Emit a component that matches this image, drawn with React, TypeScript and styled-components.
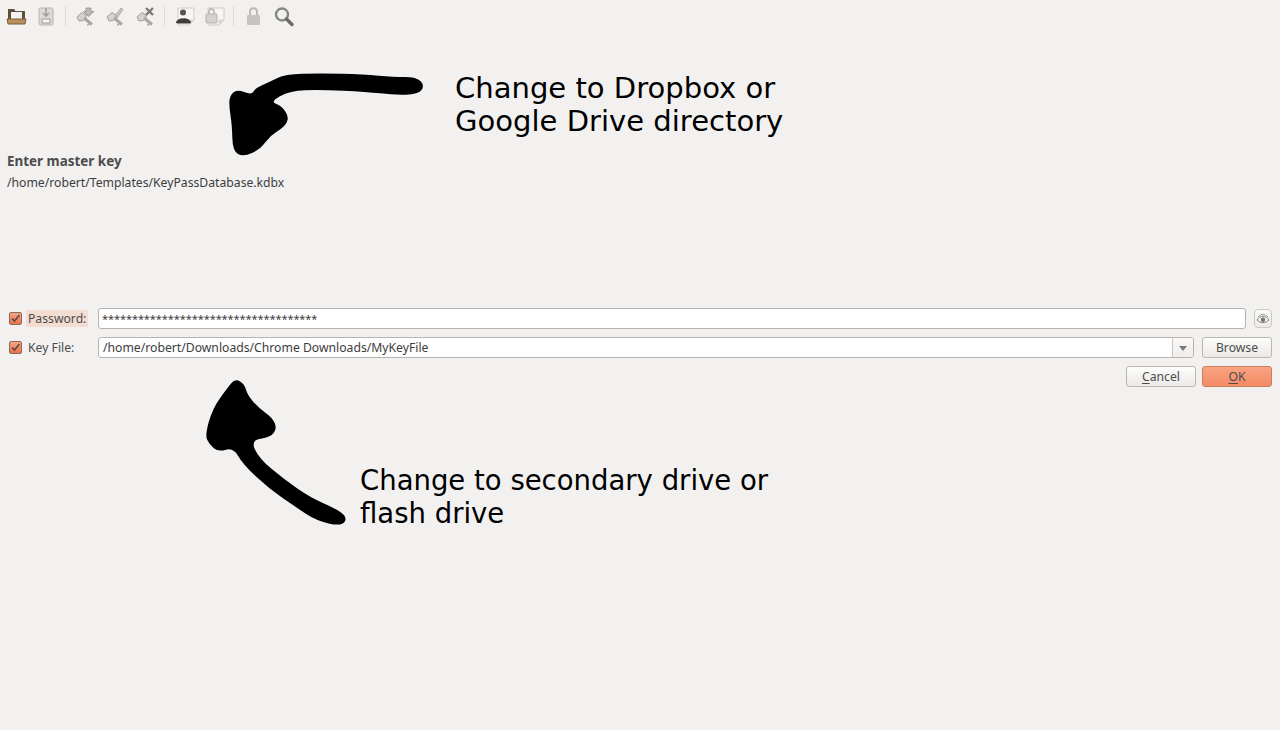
import React from 'react';
import styled, { createGlobalStyle } from 'styled-components';

const GlobalStyle = createGlobalStyle`
  html, body {
    margin: 0;
    padding: 0;
    background: #f2f1f0;
  }
  body {
    font-family: 'Noto Sans', 'Open Sans', sans-serif;
    font-size: 12.2px;
    color: #3c3c3c;
  }
`;

const Page = styled.div`
  position: relative;
  width: 1280px;
  height: 730px;
  overflow: hidden;
  background: #f2f1f0;
  box-sizing: border-box;
`;

const Toolbar = styled.div`
  display: flex;
  align-items: center;
  height: 32px;
  padding-left: 5px;
  box-sizing: border-box;
`;

const ToolIcon = styled.svg`
  width: 22px;
  height: 22px;
  margin-right: 8px;
  flex: none;
  filter: blur(0.35px);
`;

const ToolSeparator = styled.div`
  width: 1px;
  height: 20px;
  background: #dedcda;
  margin-right: 8px;
`;

const Heading = styled.div`
  margin: 120px 0 0 7px;
  font-size: 13.45px;
  line-height: 18px;
  font-weight: 700;
  color: #4c4c4c;
`;

const DbPath = styled.div`
  margin: 4px 0 0 7px;
  line-height: 18px;
  color: #3c3c3c;
`;

const Form = styled.div`
  display: flex;
  flex-direction: column;
  gap: 8px;
  margin: 116px 8px 0 8px;
`;

const FormRow = styled.div`
  display: flex;
  align-items: center;
  height: 21px;
`;

const LabelCell = styled.div`
  display: flex;
  align-items: center;
  gap: 4px;
  width: 90px;
  flex: none;
`;

const Check = styled.div`
  width: 13px;
  height: 13px;
  margin-left: 1px;
  border: 1px solid #8a6a58;
  border-radius: 2px;
  background: linear-gradient(#f6a583, #e8724a);
  display: flex;
  align-items: center;
  justify-content: center;
  flex: none;
  box-sizing: border-box;
`;

const FieldLabel = styled.span<{ $focused?: boolean }>`
  line-height: 17px;
  padding: 0 2px;
  color: #4c4c4c;
  background: ${(p) => (p.$focused ? '#f3dcd2' : 'transparent')};
`;

const TextField = styled.div`
  flex: 1;
  height: 21px;
  box-sizing: border-box;
  border: 1px solid #b6b3b0;
  border-radius: 3px;
  background: #fff;
  line-height: 19px;
  padding-left: 4px;
  color: #3c3c3c;
  display: flex;
  justify-content: space-between;
  overflow: hidden;
`;

const Stars = styled.span`
  font-size: 11px;
  letter-spacing: -0.08px;
  margin-left: -1px;
  color: #3c3c3c;
`;

const DropArrow = styled.div`
  width: 20px;
  border-left: 1px solid #c8c6c3;
  display: flex;
  align-items: center;
  justify-content: center;
  background: linear-gradient(#faf9f8, #eeedeb);
`;

const Triangle = styled.div`
  width: 0;
  height: 0;
  border-left: 4px solid transparent;
  border-right: 4px solid transparent;
  border-top: 5px solid #7b7977;
  margin-top: 2px;
`;

const EyeButton = styled.div`
  width: 18px;
  height: 19px;
  margin-left: 8px;
  border: 1px solid #cbc9c6;
  border-radius: 4px;
  background: linear-gradient(#fbfafa, #ecebe9);
  display: flex;
  align-items: center;
  justify-content: center;
  box-sizing: border-box;
`;

const Button = styled.div<{ $primary?: boolean }>`
  height: 21px;
  box-sizing: border-box;
  border: 1px solid ${(p) => (p.$primary ? '#c9805f' : '#b9b6b3')};
  border-radius: 3px;
  background: ${(p) =>
    p.$primary
      ? 'linear-gradient(#f9a384, #f58b64)'
      : 'linear-gradient(#fdfdfc, #ebe9e7)'};
  line-height: 19px;
  text-align: center;
  color: #4c4c4c;
  width: 70px;
  flex: none;
`;

const BrowseButton = styled(Button)`
  margin-left: 8px;
`;

const Access = styled.span`
  text-decoration: underline;
  text-underline-offset: 2px;
`;

const ButtonRow = styled.div`
  display: flex;
  justify-content: flex-end;
  gap: 6px;
  margin: 8px 8px 0 0;
`;

const Note = styled.div<{ $x: number; $y: number; $size: number }>`
  position: absolute;
  left: ${(p) => p.$x}px;
  top: ${(p) => p.$y}px;
  font-family: 'DejaVu Sans', sans-serif;
  font-size: ${(p) => p.$size}px;
  line-height: 33px;
  color: #000;
  white-space: nowrap;
`;

const Scribble = styled.svg<{ $x: number; $y: number }>`
  position: absolute;
  left: ${(p) => p.$x}px;
  top: ${(p) => p.$y}px;
`;

// rounded closed outline through the midpoints of a hand-drawn polygon
const blob = (pts: number[][]) => {
  const mid = (a: number[], b: number[]) => `${(a[0] + b[0]) / 2} ${(a[1] + b[1]) / 2}`;
  let d = `M${mid(pts[pts.length - 1], pts[0])}`;
  pts.forEach((p, i) => {
    d += ` Q${p[0]} ${p[1]} ${mid(p, pts[(i + 1) % pts.length])}`;
  });
  return d + ' Z';
};

const topArrow = [
  [28, 95], [50, 72], [95, 90], [105, 70], [150, 50], [195, 28], [300, 25], [430, 28],
  [520, 36], [590, 36], [614, 62], [595, 88], [520, 90], [440, 80], [300, 74], [210, 77],
  [150, 110], [185, 122], [208, 158], [192, 187], [150, 212], [122, 252], [70, 276],
  [38, 258], [36, 180], [28, 130],
];

const bottomArrow = [
  [80, 42], [105, 11], [133, 26], [142, 60], [177, 100], [217, 128], [231, 160], [212, 187],
  [152, 195], [177, 250], [252, 313], [332, 368], [402, 398], [442, 425], [427, 454],
  [350, 438], [290, 398], [208, 342], [128, 267], [100, 217], [55, 231], [28, 208],
  [15, 180], [38, 100],
];

const Tick = () => (
  <svg width="11" height="11" viewBox="0 0 11 11">
    <path d="M2 5.5 L4.5 8 L9.5 2" fill="none" stroke="#5a4a40" strokeWidth="1.6" />
  </svg>
);

const KeyShape = () => (
  <g>
    <path d="M3 12 L8 7.5 L12 10 L12 13 L9 15.5 L5 16 Z" fill="#d5d3d0" stroke="#a09e9b" strokeWidth="1" />
    <path d="M10 13 L18 19.5" stroke="#aaa8a5" strokeWidth="3" />
    <path d="M15 18.5 L13.5 20.5" stroke="#aaa8a5" strokeWidth="1.5" />
  </g>
);

const DocShape = () => (
  <g>
    <path d="M5 3 H21 V15 L16 20 H5 Z" fill="#f7f6f5" stroke="#cfcdca" />
    <path d="M21 15 H16 V20 Z" fill="#dddbd8" stroke="#cfcdca" strokeWidth="0.7" />
  </g>
);

const App: React.FC = () => {
  return (
    <Page>
      <GlobalStyle />
      <Toolbar>
        <ToolIcon viewBox="0 0 22 22">
          <path d="M3 4 H9 L10.5 6 H20 V17 H3 Z" fill="#5f4e38" />
          <rect x="6" y="7" width="11" height="7" fill="#f4f3f1" />
          <path d="M2 14 H21 L20 19 H3 Z" fill="#b8905c" stroke="#7a5f3b" strokeWidth="1" />
        </ToolIcon>
        <ToolIcon viewBox="0 0 22 22">
          <rect x="4" y="3" width="14" height="17" rx="1.5" fill="#dcdad7" stroke="#b5b3b0" />
          <path d="M11 3 V10 M8 8 L11 11 L14 8" fill="none" stroke="#a09e9b" strokeWidth="1.6" />
          <rect x="7" y="14" width="8" height="4" fill="#f4f3f1" stroke="#a09e9b" />
        </ToolIcon>
        <ToolSeparator />
        <ToolIcon viewBox="0 0 22 22">
          <KeyShape />
          <path d="M12 3 H17 V6.5 H20 L14.5 11.5 L9.5 6.5 H12 Z" fill="#bbb9b6" stroke="#918f8c" strokeWidth="0.8" />
        </ToolIcon>
        <ToolIcon viewBox="0 0 22 22">
          <KeyShape />
          <path d="M11 11 L17 3 L19 4.5 L13 13 Z" fill="#c8c6c3" stroke="#a09e9b" strokeWidth="0.8" />
        </ToolIcon>
        <ToolIcon viewBox="0 0 22 22">
          <KeyShape />
          <path d="M12 3 L19 10 M19 3 L12 10" stroke="#7b7973" strokeWidth="2.4" />
        </ToolIcon>
        <ToolSeparator />
        <ToolIcon viewBox="0 0 22 22">
          <DocShape />
          <circle cx="10" cy="7.5" r="3" fill="#57544f" />
          <path d="M3 18 C3 11.5 18 11.5 18 18 L16 18.5 H5 Z" fill="#3f3d3a" />
          <path d="M9 11.5 H11 L10 14 Z" fill="#f4f4f4" />
        </ToolIcon>
        <ToolIcon viewBox="0 0 22 22">
          <DocShape />
          <rect x="3" y="9" width="11" height="9" rx="1" fill="#d4d2cf" stroke="#b5b3b0" />
          <path d="M6 9 V6.5 C6 3 11 3 11 6.5 V9" fill="none" stroke="#b5b3b0" strokeWidth="1.5" />
        </ToolIcon>
        <ToolSeparator />
        <ToolIcon viewBox="0 0 22 22">
          <rect x="5" y="10" width="13" height="10" rx="1" fill="#c6c4c2" />
          <path d="M8 10 V7 C8 2 15 2 15 7 V10" fill="none" stroke="#bdbbb9" strokeWidth="2" />
        </ToolIcon>
        <ToolIcon viewBox="0 0 22 22">
          <circle cx="10" cy="9.5" r="6" fill="#eef1f2" stroke="#87857f" strokeWidth="2.4" />
          <path d="M14.5 14 L20 19.5" stroke="#6c6a66" strokeWidth="3.4" strokeLinecap="round" />
        </ToolIcon>
      </Toolbar>

      <Heading>Enter master key</Heading>
      <DbPath>/home/robert/Templates/KeyPassDatabase.kdbx</DbPath>

      <Form>
        <FormRow>
          <LabelCell>
            <Check><Tick /></Check>
            <FieldLabel $focused>Password:</FieldLabel>
          </LabelCell>
          <TextField>
            <Stars>{'*'.repeat(36)}</Stars>
          </TextField>
          <EyeButton>
            <svg width="14" height="14" viewBox="0 0 14 14">
              <path d="M1 8 C4 3 10 3 13 8 C10 11.5 4 11.5 1 8 Z" fill="none" stroke="#85837d" />
              <path d="M2 5 C5 1.5 9 1.5 12 5" fill="none" stroke="#a5a39f" />
              <circle cx="7" cy="7.7" r="2.2" fill="#77756f" />
            </svg>
          </EyeButton>
        </FormRow>
        <FormRow>
          <LabelCell>
            <Check><Tick /></Check>
            <FieldLabel>Key File:</FieldLabel>
          </LabelCell>
          <TextField>
            <span>/home/robert/Downloads/Chrome Downloads/MyKeyFile</span>
            <DropArrow><Triangle /></DropArrow>
          </TextField>
          <BrowseButton>Browse</BrowseButton>
        </FormRow>
      </Form>
      <ButtonRow>
        <Button><Access>C</Access>ancel</Button>
        <Button $primary><Access>O</Access>K</Button>
      </ButtonRow>

      <Scribble $x={220} $y={65} width="215" height="100" viewBox="0 0 645 300">
        <path d={blob(topArrow)} fill="#000" />
      </Scribble>
      <Scribble $x={200} $y={375} width="155" height="155" viewBox="0 0 465 465">
        <path d={blob(bottomArrow)} fill="#000" />
      </Scribble>

      <Note $x={455} $y={72} $size={29.05}>Change to Dropbox or<br />Google Drive directory</Note>
      <Note $x={360} $y={464} $size={27.5}>Change to secondary drive or<br />flash drive</Note>
    </Page>
  );
};

export default App;
